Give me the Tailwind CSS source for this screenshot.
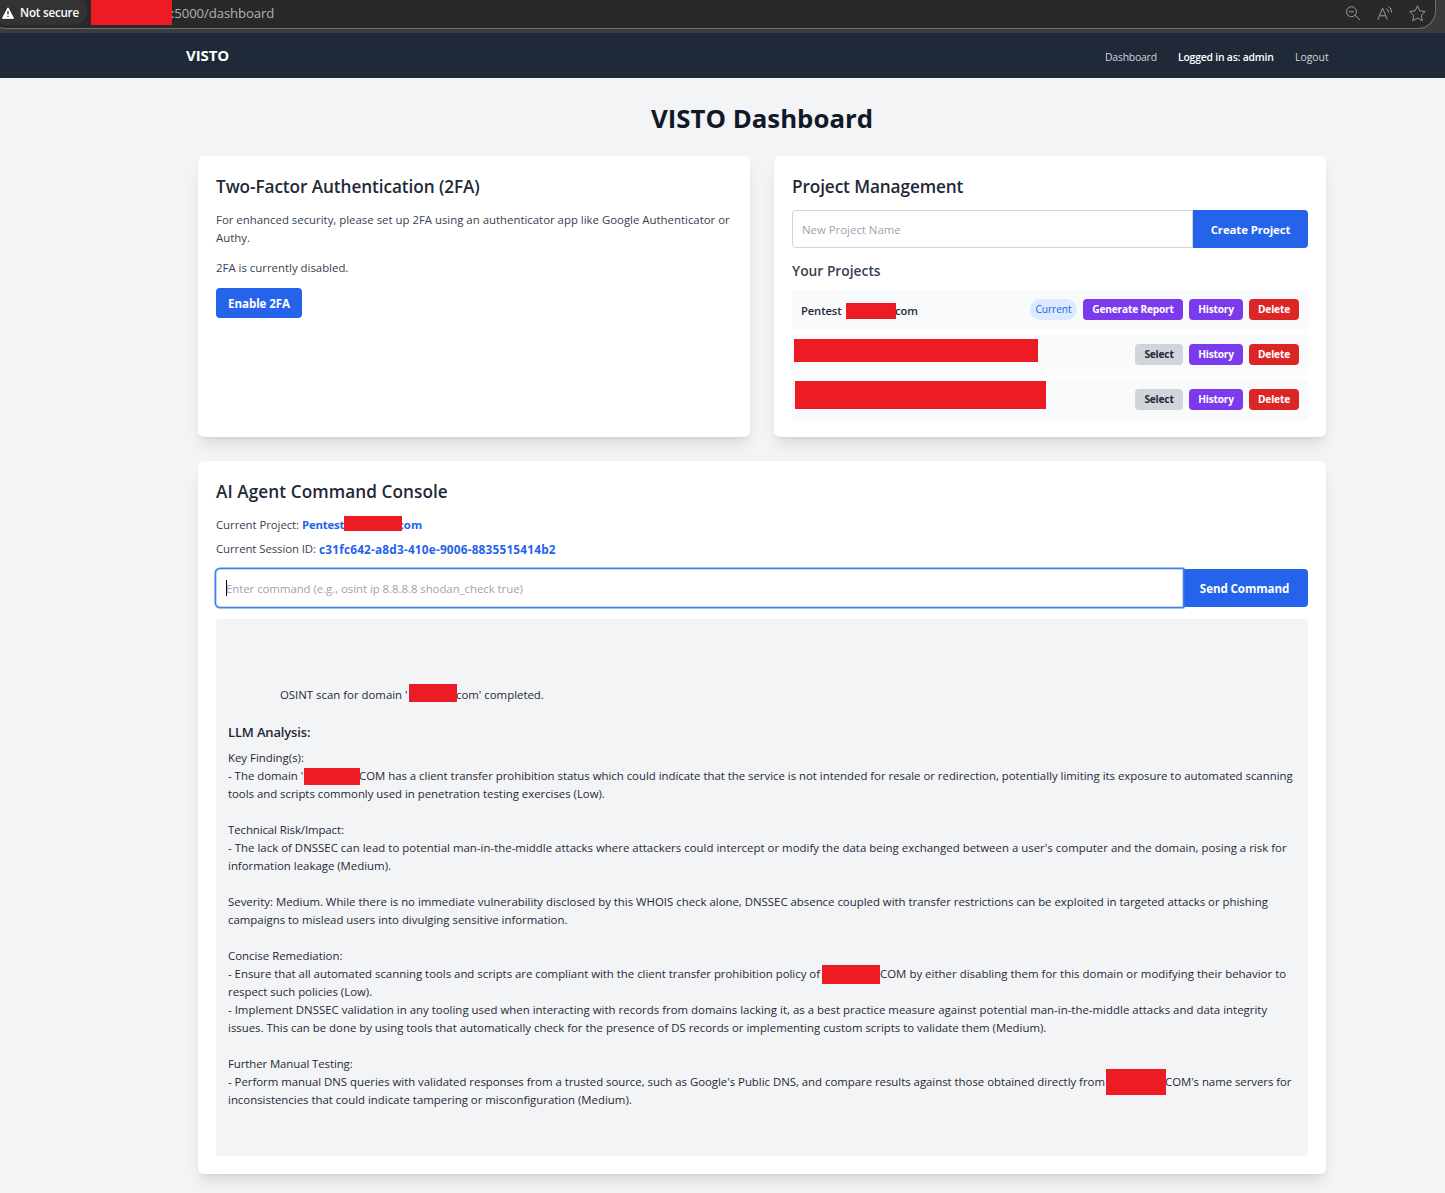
<!DOCTYPE html>
<html lang="en">
<head>
<meta charset="utf-8">
<title>VISTO Dashboard</title>
<script src="https://cdn.jsdelivr.net/npm/@tailwindcss/browser@4"></script>
</head>
<body class="h-[1193px] w-[1445px] overflow-hidden bg-[#f3f4f6] font-['Open_Sans',sans-serif] text-[11.4px] leading-[18px] text-[#374151]">
<!-- Browser address bar -->
<div class="h-[33px] bg-[#3b3b3b]">
  <div class="relative -ml-3 flex h-[29px] w-[1448px] items-start overflow-hidden rounded-b-[18px] border-r border-b border-[#707070] bg-[#292929] pl-[6px]">
    <div class="-mt-1 flex h-[29px] w-[93px] shrink-0 items-center rounded-[14px] bg-[#333333] pt-[5px] pl-2">
      <svg class="h-[12px] w-[12px] shrink-0" viewBox="0 0 12 12"><path d="M6 .8 11.6 11.3H.4Z" fill="#fff" stroke="#fff" stroke-linejoin="round"/><path d="M6 4v3.6M6 8.7v1.3" stroke="#333" stroke-width="1.3"/></svg>
      <span class="ml-[6px] whitespace-nowrap text-[11.6px] font-semibold tracking-[-0.2px] text-white">Not secure</span>
    </div>
    <div class="ml-1 h-[25px] w-[81px] shrink-0 bg-[#ed1c24]"></div>
    <span class="-ml-px mt-1 whitespace-nowrap text-[13.2px] tracking-[-0.12px] text-[#b0b0b0]">:5000/dashboard</span>
    <div class="mt-[5px] mr-[9px] ml-auto flex items-center gap-[16px] text-[#9a9a9a]">
      <svg class="h-4 w-4" viewBox="0 0 16 16" fill="none" stroke="currentColor"><circle cx="6.5" cy="5.7" r="5"/><path d="M4 5.7h5M10.2 9.3 15 14"/></svg>
      <svg class="h-4 w-4" viewBox="0 0 16 16" fill="none" stroke="currentColor"><path d="M.8 13.7 5.6 2.2 10.4 13.7M2.5 9.8h6.2M9.500 2.500q2 1.500 2 4M11.500.500q3.500 2 3 6"/></svg>
      <svg class="h-[17px] w-[17px]" viewBox="0 0 17 17" fill="none" stroke="currentColor" stroke-linejoin="round"><path d="m8.5.9 2.3 4.9 5.4.7-3.9 3.8 1 5.4-4.800-2.600-4.800 2.600 1-5.400L.8 6.500l5.400-.7Z"/></svg>
    </div>
  </div>
</div>
<!-- Navigation -->
<nav class="flex h-[45px] items-center bg-[#1f2937] pr-[116px] pl-[186px] whitespace-nowrap">
  <span class="-mt-[2px] text-[15px] font-bold tracking-[-0.1px] text-white">VISTO</span>
  <div class="mt-[3px] ml-auto flex text-[10.4px] text-[#d1d5db]">
    <span class="w-[73px] tracking-[-0.2px]">Dashboard</span>
    <span class="w-[117px] font-semibold tracking-[-0.2px] text-white">Logged in as: admin</span>
    <span class="w-[34px]">Logout</span>
  </div>
</nav>
<main class="ml-[198px] w-[1128px] pt-[22px]">
  <h1 class="text-center text-[25.8px] leading-[37px] font-bold text-[#111827]">VISTO Dashboard</h1>
  <div class="mt-[19px] grid grid-cols-2 gap-6">
    <section class="h-[281px] rounded-md bg-white p-[18px] shadow-lg">
      <h2 class="text-[17.2px] leading-[26px] font-semibold tracking-[-0.08px] text-[#1f2937]">Two-Factor Authentication (2FA)</h2>
      <p class="mt-[11px] whitespace-nowrap">For enhanced security, please set up 2FA using an authenticator app like Google Authenticator or<br>Authy.</p>
      <p class="mt-3">2FA is currently disabled.</p>
      <button class="mt-[11px] h-[30px] w-[86px] rounded bg-[#2563eb] pt-px text-[11.6px] font-bold tracking-[-0.1px] whitespace-nowrap text-white">Enable 2FA</button>
    </section>
    <section class="h-[281px] rounded-md bg-white p-[18px] shadow-lg">
      <h2 class="text-[17.2px] leading-[26px] font-semibold tracking-[-0.1px] text-[#1f2937]">Project Management</h2>
      <div class="mt-[10px] flex h-[38px]">
        <input class="w-[401px] rounded-l border border-[#d1d5db] bg-white px-[9px] pt-px placeholder:text-[#9ca3af]" placeholder="New Project Name">
        <button class="w-[115px] rounded-r bg-[#2563eb] pt-px font-bold tracking-[-0.1px] text-white">Create Project</button>
      </div>
      <h3 class="mt-3 text-[13.8px] leading-[22px] font-semibold">Your Projects</h3>
      <div class="mt-2 flex flex-col gap-[5px] text-[10.2px] leading-[18px] font-bold tracking-[-0.2px] whitespace-nowrap text-white">
        <div class="flex h-10 items-start rounded bg-[#f9fafb] px-[9px] pt-[9px] shadow-[0_0_1px_rgba(0,0,0,0.06)]">
          <span class="mt-[3px] w-[45px] text-[11.2px] font-semibold tracking-[-0.1px] text-[#1f2937]">Pentest</span>
          <span class="mt-1 h-4 w-[50px] bg-[#ed1c24]"></span>
          <span class="mt-[3px] -ml-px text-[11.2px] font-semibold tracking-[-0.1px] text-[#1f2937]">com</span>
          <div class="ml-auto flex gap-[6px] text-center">
            <span class="h-[21px] w-[47px] rounded-full bg-[#dbeafe] leading-5 font-normal tracking-[-0.05px] text-[#2563eb]">Current</span>
            <button class="h-[21px] w-[100px] rounded bg-[#7c3aed] pb-px">Generate Report</button>
            <button class="h-[21px] w-[54px] rounded bg-[#7c3aed] pb-px">History</button>
            <button class="h-[21px] w-[50px] rounded bg-[#dc2626] pb-px">Delete</button>
          </div>
        </div>
        <div class="flex h-10 items-start rounded bg-[#f9fafb] pr-[9px] pl-[2px] shadow-[0_0_1px_rgba(0,0,0,0.06)]">
          <span class="mt-1 h-[23px] w-[244px] bg-[#ed1c24]"></span>
          <div class="mt-[9px] ml-auto flex gap-[6px] text-center">
            <button class="h-[21px] w-[48px] rounded bg-[#d1d5db] pb-px text-[#1f2937]">Select</button>
            <button class="h-[21px] w-[54px] rounded bg-[#7c3aed] pb-px">History</button>
            <button class="h-[21px] w-[50px] rounded bg-[#dc2626] pb-px">Delete</button>
          </div>
        </div>
        <div class="flex h-10 items-start rounded bg-[#f9fafb] pr-[9px] pl-[3px] shadow-[0_0_1px_rgba(0,0,0,0.06)]">
          <span class="mt-px h-[28px] w-[251px] bg-[#ed1c24]"></span>
          <div class="mt-[9px] ml-auto flex gap-[6px] text-center">
            <button class="h-[21px] w-[48px] rounded bg-[#d1d5db] pb-px text-[#1f2937]">Select</button>
            <button class="h-[21px] w-[54px] rounded bg-[#7c3aed] pb-px">History</button>
            <button class="h-[21px] w-[50px] rounded bg-[#dc2626] pb-px">Delete</button>
          </div>
        </div>
      </div>
    </section>
  </div>
  <!-- Command console -->
  <section class="mt-6 h-[713px] rounded-md bg-white p-[18px] shadow-lg">
    <h2 class="text-[17.2px] leading-[26px] font-semibold tracking-[0.07px] text-[#1f2937]">AI Agent Command Console</h2>
    <p class="mt-[11px] flex h-[18px] whitespace-nowrap"><span class="w-[86px] tracking-[-0.06px]">Current Project:</span><span class="w-[42px] font-bold tracking-[-0.2px] text-[#2563eb]">Pentest</span><span class="z-10 h-[15px] w-[58px] bg-[#ed1c24]"></span><span class="-ml-[4px] font-bold text-[#2563eb]">com</span></p>
    <p class="mt-[6px] flex h-[18px] whitespace-nowrap"><span class="w-[103px] tracking-[-0.08px]">Current Session ID:</span><span class="text-[11.8px] font-bold tracking-[0.2px] text-[#2563eb]">c31fc642-a8d3-410e-9006-8835515414b2</span></p>
    <div class="mt-[11px] flex h-[38px]">
      <div class="z-10 flex w-[967px] items-center rounded-l border border-[#d1d5db] bg-white pl-[9px] text-[#9ca3af] shadow-[0_0_0_1.5px_#3b82f6]"><span class="h-4 w-px bg-black"></span><span class="mt-[2px] -ml-px tracking-[-0.04px]">Enter command (e.g., osint ip 8.8.8.8 shodan_check true)</span></div>
      <button class="w-[125px] rounded-r bg-[#2563eb] pt-px pr-[2px] text-[11.6px] font-bold tracking-[-0.1px] text-white">Send Command</button>
    </div>
    <div class="mt-3 h-[537px] rounded bg-[#f3f4f6] px-3 pt-[67px] whitespace-nowrap text-[#1f2937]">
      <p class="flex h-[18px] pl-[52px]"><span class="w-[129px]">OSINT scan for domain '</span><span class="-mt-[2px] h-[18px] w-[48px] bg-[#ed1c24]"></span><span class="-ml-px">com' completed.</span></p>
      <h3 class="mt-[19px] text-[13px] leading-[18px] font-semibold tracking-[-0.15px]">LLM Analysis:</h3>
      <p class="mt-2">Key Finding(s):</p>
      <p class="flex h-[18px]"><span class="w-[76px]">- The domain '</span><span class="mt-px h-[17px] w-[56px] bg-[#ed1c24]"></span><span class="-ml-px tracking-[-0.015px]">COM has a client transfer prohibition status which could indicate that the service is not intended for resale or redirection, potentially limiting its exposure to automated scanning</span></p>
      <p class="tracking-[-0.02px]">tools and scripts commonly used in penetration testing exercises (Low).</p>
      <p class="mt-[18px] tracking-[-0.08px]">Technical Risk/Impact:</p>
      <p class="tracking-[0.026px]">- The lack of DNSSEC can lead to potential man-in-the-middle attacks where attackers could intercept or modify the data being exchanged between a user's computer and the domain, posing a risk for</p>
      <p>information leakage (Medium).</p>
      <p class="mt-[18px] tracking-[-0.004px]">Severity: Medium. While there is no immediate vulnerability disclosed by this WHOIS check alone, DNSSEC absence coupled with transfer restrictions can be exploited in targeted attacks or phishing</p>
      <p>campaigns to mislead users into divulging sensitive information.</p>
      <p class="mt-[18px]">Concise Remediation:</p>
      <p class="flex h-[18px]"><span class="w-[594px] tracking-[-0.01px]">- Ensure that all automated scanning tools and scripts are compliant with the client transfer prohibition policy of</span><span class="h-[19px] w-[58px] bg-[#ed1c24]"></span><span class="tracking-[0.035px]">COM by either disabling them for this domain or modifying their behavior to</span></p>
      <p>respect such policies (Low).</p>
      <p class="tracking-[0.022px]">- Implement DNSSEC validation in any tooling used when interacting with records from domains lacking it, as a best practice measure against potential man-in-the-middle attacks and data integrity</p>
      <p>issues. This can be done by using tools that automatically check for the presence of DS records or implementing custom scripts to validate them (Medium).</p>
      <p class="mt-[18px] tracking-[-0.08px]">Further Manual Testing:</p>
      <p class="flex h-[18px]"><span class="w-[878px] tracking-[-0.02px]">- Perform manual DNS queries with validated responses from a trusted source, such as Google's Public DNS, and compare results against those obtained directly from</span><span class="-mt-1 h-[26px] w-[60px] bg-[#ed1c24]"></span><span class="-ml-px tracking-[-0.04px]">COM's name servers for</span></p>
      <p>inconsistencies that could indicate tampering or misconfiguration (Medium).</p>
    </div>
  </section>
</main>
</body>
</html>
